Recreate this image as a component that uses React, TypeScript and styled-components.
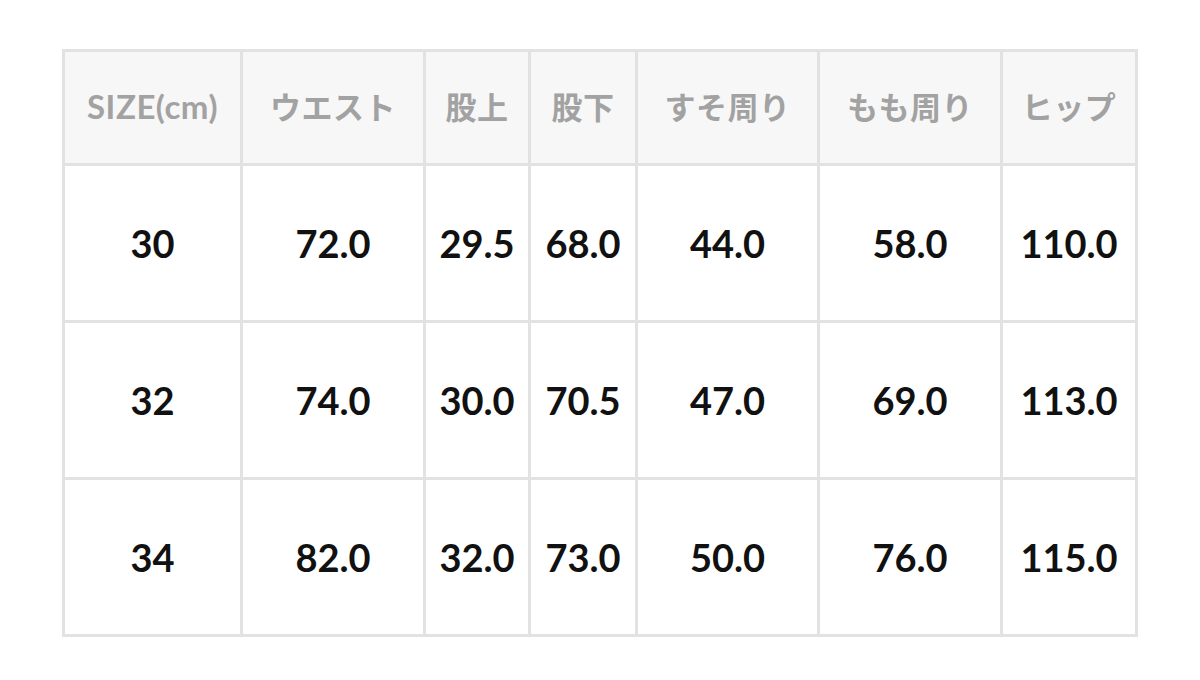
import React from "react";
import styled, { createGlobalStyle } from "styled-components";

const GlobalStyle = createGlobalStyle`
  body {
    margin: 0;
    background: #ffffff;
    font-family: Lato, "Noto Sans CJK JP", sans-serif;
  }
`;

const columns = [
  { label: "SIZE(cm)", width: 178, size: 33 },
  { label: "ウエスト", width: 183, size: 31 },
  { label: "股上", width: 105, size: 31 },
  { label: "股下", width: 107, size: 31 },
  { label: "すそ周り", width: 182, size: 31 },
  { label: "もも周り", width: 183, size: 31 },
  { label: "ヒップ", width: 135, size: 31 },
];

const rows = [
  ["30", "72.0", "29.5", "68.0", "44.0", "58.0", "110.0"],
  ["32", "74.0", "30.0", "70.5", "47.0", "69.0", "113.0"],
  ["34", "82.0", "32.0", "73.0", "50.0", "76.0", "115.0"],
];

export default function App(): JSX.Element {
  return (
    <Page>
      <GlobalStyle />
      <SizeTable>
        <colgroup>
          {columns.map((c) => (
            <col key={c.label} style={{ width: c.width }} />
          ))}
        </colgroup>
        <thead>
          <tr>
            {columns.map((c) => (
              <HeadCell key={c.label} $size={c.size}>
                {c.label}
              </HeadCell>
            ))}
          </tr>
        </thead>
        <tbody>
          {rows.map((row) => (
            <tr key={row[0]}>
              {row.map((value, i) => (
                <Cell key={i}>{value}</Cell>
              ))}
            </tr>
          ))}
        </tbody>
      </SizeTable>
    </Page>
  );
}

const Page = styled.div`
  padding: 49px 0 0 62px;
`;

const SizeTable = styled.table`
  table-layout: fixed;
  width: 1076px;
  border-collapse: separate;
  border-spacing: 0;
  border-top: 3px solid #e2e2e2;
  border-left: 3px solid #e2e2e2;
`;

const BaseCell = styled.td`
  box-sizing: border-box;
  padding: 0;
  text-align: center;
  vertical-align: middle;
  border-right: 3px solid #e2e2e2;
  border-bottom: 3px solid #e2e2e2;
  font-weight: 700;
  white-space: nowrap;
`;

const HeadCell = styled(BaseCell).attrs({ as: "th" })<{ $size: number }>`
  height: 114px;
  padding-bottom: 4px;
  background: #f7f7f7;
  color: #a2a2a2;
  font-size: ${(p) => p.$size}px;
  letter-spacing: 0.5px;
`;

const Cell = styled(BaseCell)`
  height: 157px;
  color: #111111;
  font-size: 38px;
`;
